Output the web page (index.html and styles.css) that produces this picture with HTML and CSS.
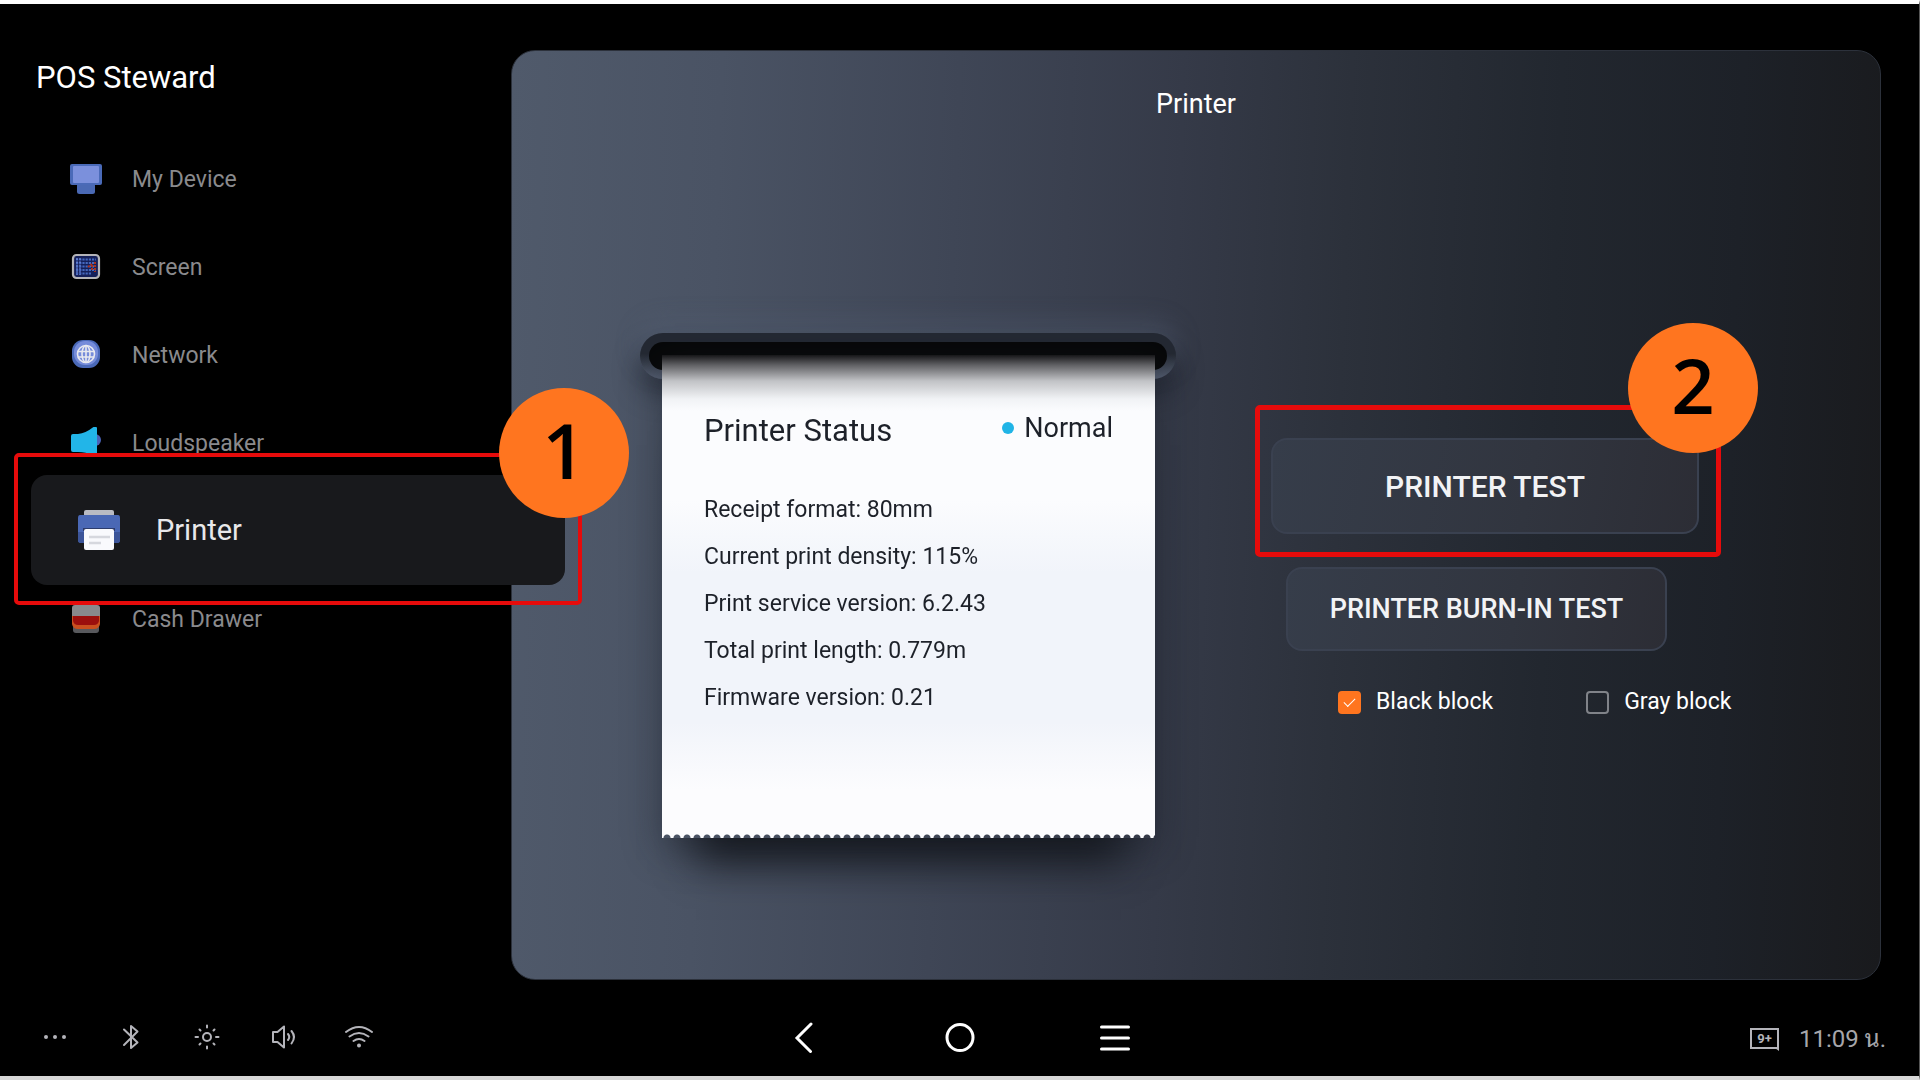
FILE: index.html
```html
<!DOCTYPE html>
<html lang="en">
<head>
<meta charset="utf-8">
<title>POS Steward</title>
<link rel="stylesheet" href="styles.css">
</head>
<body>
<div class="app">
  <div class="workspace">
    <aside class="sidebar">
      <h1 class="app-title">POS Steward</h1>
      <nav>
        <ul class="menu">
          <li class="menu-item"><a class="menu-link" href="#device">
            <svg class="menu-icon" viewBox="0 0 32 32"><rect x="7" y="20" width="18" height="11" rx="2.500" fill="#4a69b4"/><rect x="0" y="1" width="32" height="21" rx="2" fill="#4a6ab8"/><rect x="3" y="3" width="26" height="17" rx="1" fill="#7b90dc"/></svg>
            My Device</a></li>
          <li class="menu-item"><a class="menu-link" href="#screen">
            <svg class="menu-icon" viewBox="0 0 32 32"><rect x="3" y="4" width="26" height="23" rx="3.500" fill="#15205a" stroke="#b4b4b8" stroke-width="2.200"/><path d="M6 8.500h20M6 12h20M6 15.500h18M6 19h20M6 22.500h16" stroke="#4568bd" stroke-width="1.800" stroke-dasharray="2.200 1"/><path d="M7 7v17M10 7v17" stroke="#6f8be0" stroke-width="1.200" stroke-dasharray="2 1.200"/><path d="M18 16l4-3v6M25 11v10" stroke="#a8321d" stroke-width="2" stroke-dasharray="2 1" fill="none"/></svg>
            Screen</a></li>
          <li class="menu-item"><a class="menu-link" href="#network">
            <svg class="menu-icon" viewBox="0 0 32 32"><rect x="2" y="1" width="28" height="28" rx="11" fill="#4a69b8"/><rect x="4" y="2" width="24" height="24" rx="11" fill="#768cda"/><g fill="none" stroke="#e8e9ef" stroke-width="1.600"><circle cx="16" cy="15" r="8.500"/><ellipse cx="16" cy="15" rx="4" ry="8.500"/><path d="M8 12.500h16M8 18h16M16 6.500v17"/></g></svg>
            Network</a></li>
          <li class="menu-item"><a class="menu-link" href="#loudspeaker">
            <svg class="menu-icon" viewBox="0 0 32 32"><circle cx="25" cy="13" r="6" fill="#4a63b8"/><path d="M1 9q0-2 2-2h5q8-1 14-6 4-3 5 0v26q-1 3-5 1-6-3-14-3H3q-2 0-2-2z" fill="#22b5e8"/></svg>
            Loudspeaker</a></li>
          <li class="menu-item menu-item-active"><a class="menu-link" href="#printer" aria-current="page">
            <svg class="menu-icon" viewBox="0 0 44 44"><rect x="7" y="2" width="30" height="10" rx="2" fill="#b9bbc3"/><path d="M3 7h38q2 0 2 3v22q0 3-3 3H4q-3 0-3-3V10q0-3 2-3z" fill="#4a68b5"/><path d="M1 24v8q0 3 3 3h4V24zM43 24v8q0 3-3 3h-4V24z" fill="#3c5599"/><path d="M6 20h32v3H6z" fill="#2d3c6c"/><rect x="7" y="21" width="30" height="21" rx="2" fill="#f9fafd"/><path d="M12 29h21M12 35h12" stroke="#d6d8de" stroke-width="2.500"/></svg>
            Printer</a>
            <div class="marker marker-menu"><span class="marker-step">1</span></div>
          </li>
          <li class="menu-item"><a class="menu-link" href="#drawer">
            <svg class="menu-icon" viewBox="0 0 32 32"><rect x="3" y="18" width="26" height="12" rx="3" fill="#58595d"/><rect x="2" y="2" width="28" height="14" rx="3" fill="#88898c"/><path d="M2 13h28v8q-1 5-6 5H8q-5 0-6-5z" fill="#c9501f"/><path d="M3 13h26v5q-1 4-5 4H8q-4 0-5-4z" fill="#9b0f0d"/></svg>
            Cash Drawer</a></li>
        </ul>
      </nav>
    </aside>

    <main class="panel">
      <h2 class="panel-title">Printer</h2>
      <div class="panel-body">
        <div class="printer">
          <div class="slot"></div>
          <section class="receipt">
            <div class="paper">
              <header class="paper-head">
                <h3 class="paper-title">Printer Status</h3>
                <span class="state">Normal</span>
              </header>
              <ul class="facts">
                <li>Receipt format: 80mm</li>
                <li>Current print density: 115%</li>
                <li>Print service version: 6.2.43</li>
                <li>Total print length: 0.779m</li>
                <li>Firmware version: 0.21</li>
              </ul>
            </div>
          </section>
        </div>

        <div class="actions">
          <div class="primary">
            <button class="btn btn-large" type="button">PRINTER TEST</button>
            <div class="marker marker-test"><span class="marker-step">2</span></div>
          </div>
          <button class="btn btn-small" type="button">PRINTER BURN-IN TEST</button>
          <div class="options">
            <label class="option"><input class="check" type="checkbox" checked>Black block</label>
            <label class="option"><input class="check" type="checkbox">Gray block</label>
          </div>
        </div>
      </div>
    </main>
  </div>

  <footer class="system-bar">
    <div class="quick">
      <button class="icon-btn" type="button" aria-label="More"><svg viewBox="0 0 32 32" fill="#b4b4ba"><circle cx="7" cy="16" r="2"/><circle cx="16" cy="16" r="2"/><circle cx="25" cy="16" r="2"/></svg></button>
      <button class="icon-btn" type="button" aria-label="Bluetooth"><svg viewBox="0 0 32 32" class="line"><path d="M9 8.500l13.500 13L16 27V5l6.500 5.500L9 24"/></svg></button>
      <button class="icon-btn" type="button" aria-label="Brightness"><svg viewBox="0 0 32 32" class="line"><circle cx="16" cy="16" r="4"/><path d="M16 4.500v2M16 25.500v2M4.500 16h2.500M25 16h2.500M8.500 8.500l1 1M22.500 22.500l1 1M8.500 23.500l1-1M22.500 9.500l1-1"/></svg></button>
      <button class="icon-btn" type="button" aria-label="Volume"><svg viewBox="0 0 32 32" class="line"><path d="M6 11h4.500l6.500-5.500v21L10.500 21H6zM21 13q2.500 3 0 6M24.500 10q5 6 0 12.500"/></svg></button>
      <button class="icon-btn" type="button" aria-label="Wi-Fi"><svg viewBox="0 0 32 32" class="line"><path d="M3 11q13-10 26 0M6.500 15.500q9.500-7 19 0M10.500 20q5.500-4 11 0"/><circle cx="16" cy="24.500" r="1" fill="#b4b4ba"/></svg></button>
    </div>
    <div class="keys">
      <button class="icon-btn" type="button" aria-label="Back"><svg viewBox="0 0 32 32" class="key"><path d="M22 3L8 17l13.500 13.500"/></svg></button>
      <button class="icon-btn" type="button" aria-label="Home"><svg viewBox="0 0 32 32" class="key"><circle cx="16" cy="16.500" r="13"/></svg></button>
      <button class="icon-btn" type="button" aria-label="Recent apps"><svg viewBox="0 0 32 32" class="key"><path d="M2.500 6h27M2.500 17h27M2.500 28h27"/></svg></button>
    </div>
    <div class="status">
      <span class="notice">9+</span>
      <time class="clock">11:09 น.</time>
    </div>
  </footer>
</div>
</body>
</html>
```
FILE: styles.css
```css
* { box-sizing: border-box; }

body {
  margin: 0;
  background: #000;
  color: #fff;
  font-family: Roboto, "Noto Sans Thai Looped", Loma, Waree, Garuda, "Noto Sans Thai", "Noto Sans", sans-serif;
  font-size: 23px;
}

ul { list-style: none; margin: 0; padding: 0; }
h1, h2, h3 { margin: 0; font-weight: 400; }
button { font-family: inherit; color: inherit; cursor: pointer; }

.app {
  display: flex;
  flex-direction: column;
  min-height: 100vh;
  border-top: 4px solid #fdfdfd;
  border-bottom: 4px solid #d8d8d8;
  border-right: 1px solid #555;
}

.workspace {
  flex: 1;
  display: flex;
  padding: 46px 38px 0 0;
}

/* Sidebar */
.sidebar { flex: 0 0 511px; }

.app-title {
  padding: 8px 0 0 36px;
  margin-bottom: 37px;
  font-size: 31px;
  line-height: 40px;
}

.menu-item { position: relative; height: 88px; }

.menu-link {
  display: flex;
  align-items: center;
  gap: 30px;
  height: 88px;
  padding-left: 70px;
  color: #8a8a8d;
  text-decoration: none;
}

.menu-icon { width: 32px; height: 32px; }

.menu-item-active {
  z-index: 1;
  height: 110px;
  margin: -12px -54px -10px 31px;
  border-radius: 16px;
  background: #18191c;
}

.menu-item-active .menu-link {
  height: 110px;
  gap: 35px;
  padding-left: 46px;
  color: #e8e8ea;
  font-size: 29px;
}

.menu-item-active .menu-icon { width: 44px; height: 44px; }

/* Step markers lie over the control they point out */
.marker {
  position: absolute;
  border: 4px solid #e60b0b;
  border-radius: 5px;
  pointer-events: none;
}

.marker-menu { inset: -22px -17px -20px -17px; }
.marker-test { inset: -33px -22px -23px -16px; border-width: 5px; }

.marker-step {
  position: absolute;
  display: grid;
  place-items: center;
  width: 130px;
  height: 130px;
  padding-bottom: 7px;
  border-radius: 50%;
  background: #ff751f;
  color: #000;
  font-family: "Open Sans", "Noto Sans", sans-serif;
  font-size: 76px;
  font-weight: 600;
  line-height: 1;
}

.marker-menu .marker-step { top: -69px; right: -51px; }
.marker-test .marker-step { top: -87px; right: -42px; }

/* Panel */
.panel {
  flex: 1;
  border: 1px solid #2c313b;
  border-radius: 24px;
  background: linear-gradient(92deg, #505a6b 0%, #4a5364 15%, #3f4656 32%, #353a48 48%, #2c313b 60%, #22272f 75%, #1d2128 88%, #191a1d 100%);
}

.panel-title {
  padding-top: 33px;
  font-size: 27px;
  line-height: 40px;
  text-align: center;
}

.panel-body {
  display: flex;
  align-items: flex-start;
  gap: 95px;
  padding: 209px 0 140px 128px;
}

/* Receipt printer */
.printer { flex: 0 0 536px; }

.slot {
  height: 46px;
  border: 9px solid transparent;
  border-radius: 23px;
  background:
    linear-gradient(#070809, #070809) padding-box,
    linear-gradient(#242933 45%, #566073) border-box;
  box-shadow: 0 -10px 24px rgba(86, 97, 117, .45), 0 14px 26px rgba(20, 24, 32, .55);
}

.receipt {
  position: relative;
  margin: -24px 21px 0 22px;
  box-shadow: 0 12px 36px rgba(24, 28, 38, .45), 0 56px 40px -34px #14171d;
}

.paper {
  height: 483px;
  padding: 53px 42px 0;
  color: #1d2129;
  background:
    linear-gradient(rgba(10, 10, 12, .95), rgba(30, 30, 34, .7) 10px, rgba(60, 62, 68, .3) 26px, rgba(120, 130, 140, .08) 44px, transparent 56px),
    linear-gradient(#fbfcfe 30%, #f1f4fa 45%, #f1f4fa 76%, #fcfcfe 90%);
  -webkit-mask:
    linear-gradient(#000, #000) top / 100% calc(100% - 5px) no-repeat,
    radial-gradient(circle at 50% 100%, transparent 3px, #000 4px) bottom left / 10px 5px repeat-x;
}

.paper-head {
  display: flex;
  justify-content: space-between;
  align-items: flex-start;
  margin-bottom: 32px;
}

.paper-title { font-size: 31px; line-height: 46px; }

.state {
  display: flex;
  align-items: center;
  gap: 10px;
  font-size: 27px;
  line-height: 40px;
}

.state::before {
  content: "";
  width: 12px;
  height: 12px;
  border-radius: 50%;
  background: #20b4e6;
}

.facts { line-height: 47px; }

/* Actions */
.actions {
  display: flex;
  flex-direction: column;
  align-items: flex-start;
  padding-top: 105px;
}

.primary { position: relative; }

.btn {
  display: block;
  border: 2px solid #3a4150;
  border-radius: 16px;
  background: linear-gradient(100deg, #363d4a, #31353f 60%, #2c2d35);
  color: #f2f3f5;
  font-weight: 500;
}

.btn-large { width: 428px; height: 96px; font-size: 30px; }

.btn-small {
  width: 381px;
  height: 84px;
  margin: 33px 0 31px 15px;
  font-size: 27px;
}

.options { display: flex; gap: 93px; margin-left: 67px; }

.option {
  display: flex;
  align-items: center;
  gap: 15px;
  line-height: 40px;
}

.check {
  appearance: none;
  display: grid;
  place-items: center;
  width: 23px;
  height: 23px;
  margin: 0;
  border: 2px solid #808389;
  border-radius: 4px;
}

.check:checked { border-color: #ff751f; background: #ff751f; }

.check:checked::after {
  content: "";
  width: 10px;
  height: 5px;
  margin-bottom: 3px;
  border: solid #fff;
  border-width: 0 0 1px 1px;
  transform: rotate(-45deg);
}

/* System bar */
.system-bar {
  display: grid;
  grid-template-columns: 1fr auto 1fr;
  align-items: center;
  height: 96px;
  padding: 18px 33px 0 39px;
}

.icon-btn {
  width: 32px;
  height: 32px;
  padding: 0;
  border: 0;
  background: none;
}

.icon-btn svg { display: block; width: 32px; height: 32px; }
.line { fill: none; stroke: #b4b4ba; stroke-width: 2; stroke-linecap: round; stroke-linejoin: round; }
.key { fill: none; stroke: #fff; stroke-width: 3; stroke-linecap: round; }

.quick { display: flex; gap: 44px; }
.keys { display: flex; gap: 123px; margin-right: 6px; }

.status {
  display: flex;
  justify-content: flex-end;
  align-items: center;
  gap: 20px;
  padding-top: 3px;
  color: #a6a6aa;
}

.notice {
  position: relative;
  width: 29px;
  height: 21px;
  border: 2px solid #b4b4ba;
  color: #b4b4ba;
  font-size: 13px;
  font-weight: 700;
  line-height: 17px;
  text-align: center;
}

/* Speech-bubble tail */
.notice::after {
  content: "";
  position: absolute;
  right: -2px;
  bottom: -4px;
  border-top: 3px solid #b4b4ba;
  border-left: 4px solid transparent;
}

.clock { font-size: 24px; line-height: 32px; }
```
